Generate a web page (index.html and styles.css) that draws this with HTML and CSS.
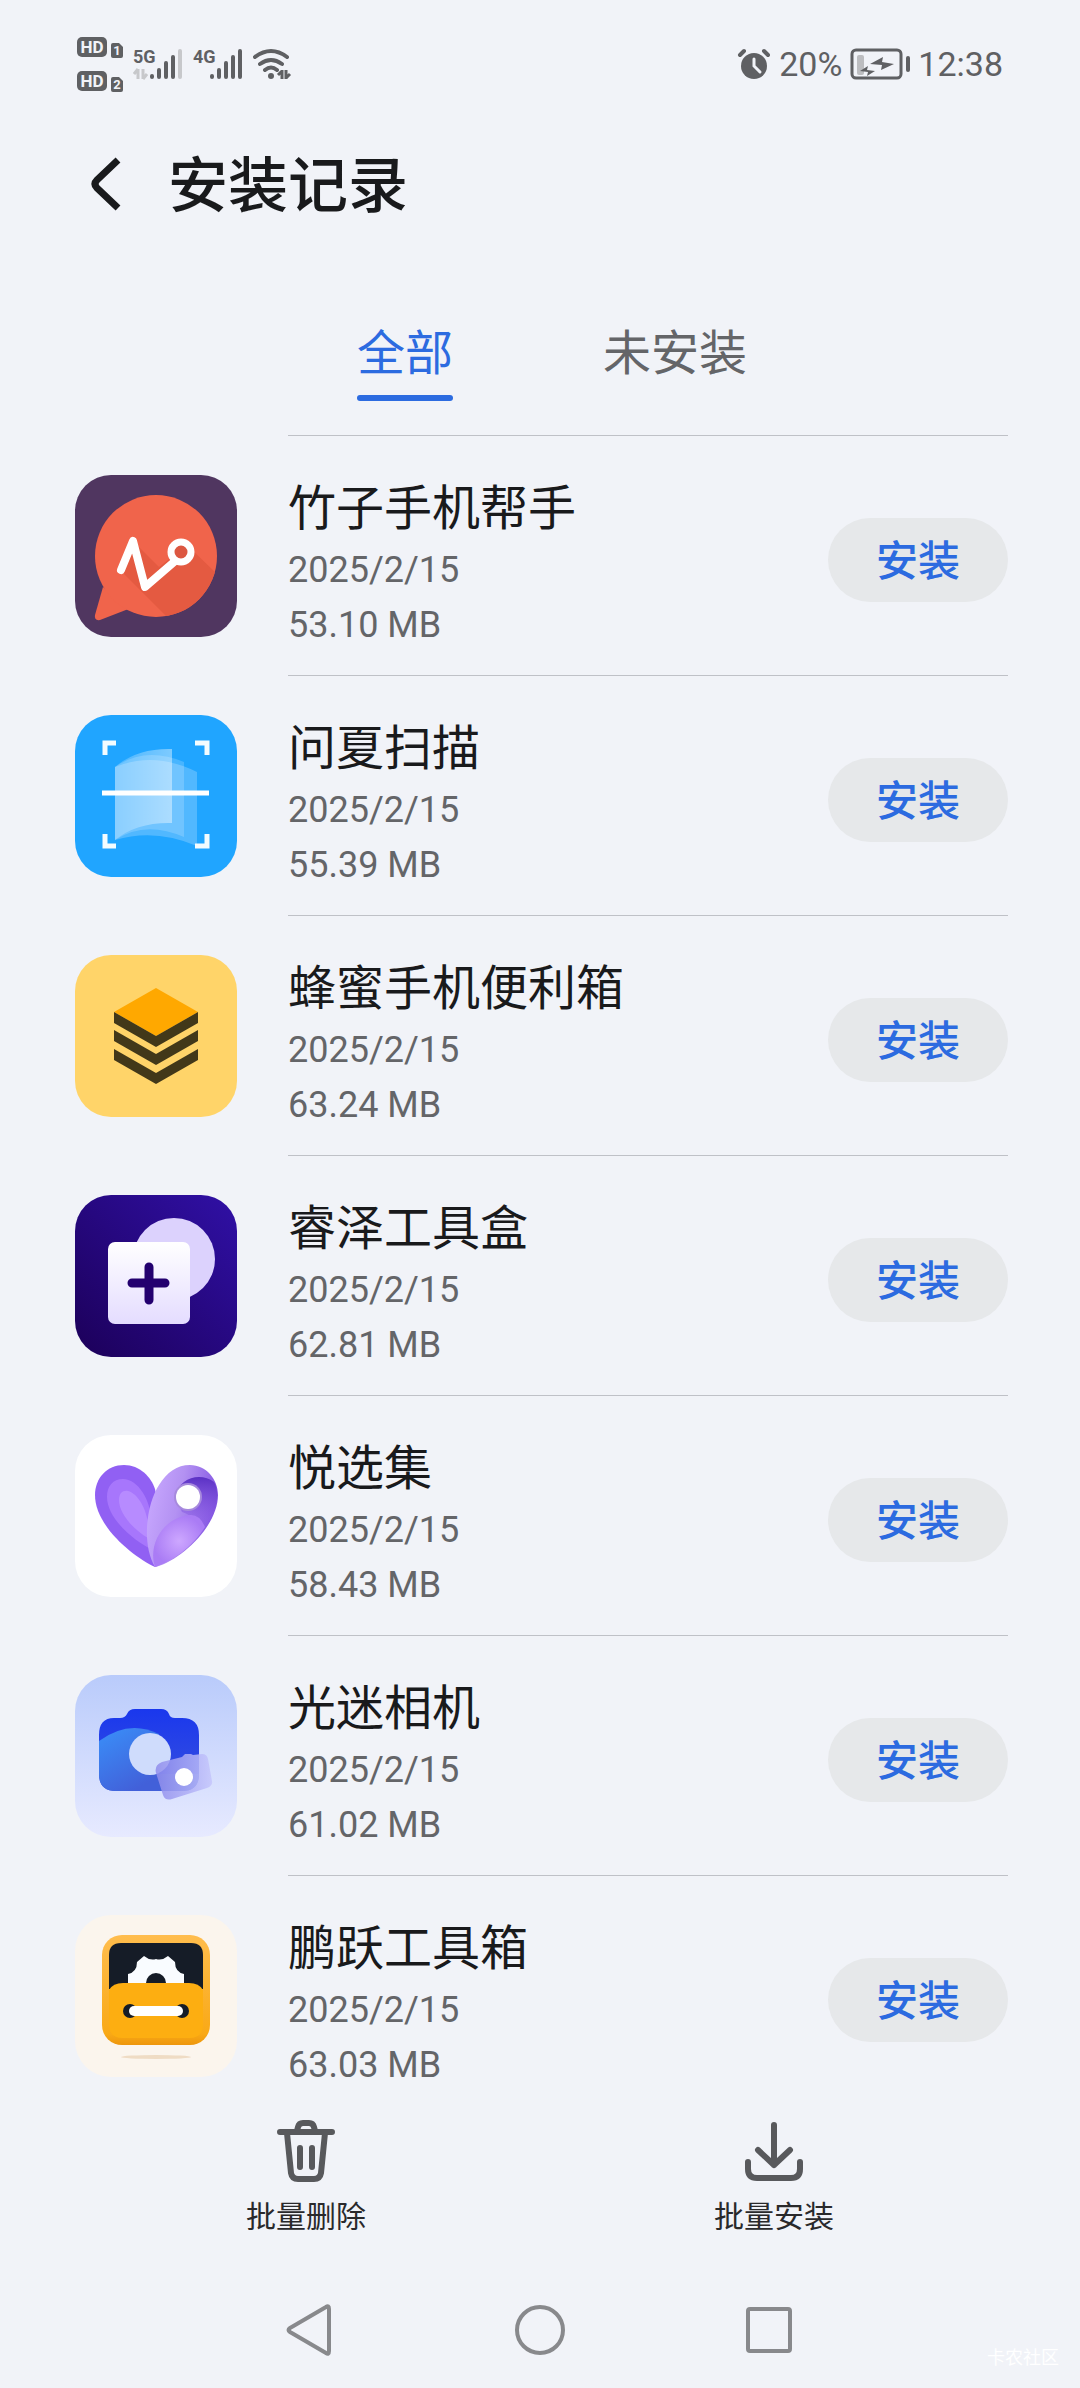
FILE: index.html
```html
<!DOCTYPE html>
<html lang="zh-CN">
<head>
<meta charset="UTF-8">
<meta name="viewport" content="width=device-width, initial-scale=1.0">
<title>安装记录</title>
<link rel="stylesheet" href="styles.css">
</head>
<body>
<div class="screen">
    <!-- Status bar -->
    <div class="status-bar">
        <div class="status-left">
            <svg width="46" height="68" viewBox="0 -6 46 68">
                <g fill="#5f6063">
                    <rect x="0" y="1" width="30" height="20" rx="5"/>
                    <path d="M36 7h6l4 4v9q0 2-2 2h-8q-2 0-2-2v-11q0-2 2-2z"/>
                    <rect x="0" y="35" width="30" height="20" rx="5"/>
                    <path d="M36 41h6l4 4v9q0 2-2 2h-8q-2 0-2-2v-11q0-2 2-2z"/>
                </g>
                <g class="hd-text">
                    <text x="15" y="17">HD</text>
                    <text x="15" y="51">HD</text>
                    <text class="hd-num" x="40" y="19">1</text>
                    <text class="hd-num" x="40" y="53">2</text>
                </g>
            </svg>
            <svg width="50" height="48" viewBox="0 -8 50 48">
                <text class="net-text" x="0" y="15">5G</text>
                <path d="M5 21v10M5 21l-4 5M10 21v10M10 31l4-5" stroke="#c7c8cb" stroke-width="3" fill="none"/>
                <path d="M19 28v1M26 22v7M33 15v14M40 9v20" stroke="#5f6063" stroke-width="4" stroke-linecap="round"/>
                <path d="M47 3v26" stroke="#c7c8cb" stroke-width="4" stroke-linecap="round"/>
            </svg>
            <svg width="50" height="48" viewBox="0 -8 50 48">
                <text class="net-text" x="0" y="15">4G</text>
                <path d="M19 28v1M26 22v7M33 15v14M40 9v20M47 3v26" stroke="#5f6063" stroke-width="4" stroke-linecap="round"/>
            </svg>
            <svg width="40" height="32" viewBox="0 0 40 32">
                <g stroke="#5f6063" stroke-width="4" stroke-linecap="round" fill="none">
                    <path d="M2 9q16-12 32 0M7 16q11-8 22 0M12 22q6-5 12 0"/>
                </g>
                <circle cx="18" cy="28" r="3" fill="#5f6063"/>
                <path d="M29 22v9M29 23l-4 4M33 22v9M33 30l4-4" stroke="#5f6063" stroke-width="3" fill="none"/>
            </svg>
        </div>
        <div class="status-right">
            <svg width="34" height="34" viewBox="0 0 34 34">
                <circle cx="17" cy="19" r="13" fill="#5f6063"/>
                <path d="M3 8l4-4M31 8l-4-4" stroke="#5f6063" stroke-width="4" stroke-linecap="round"/>
                <path d="M17 12v7l6 6" stroke="#f1f3f8" stroke-width="3" stroke-linecap="round" fill="none"/>
            </svg>
            <span>20%</span>
            <svg width="60" height="34" viewBox="0 0 60 34">
                <rect x="2" y="3" width="49" height="28" rx="4" fill="none" stroke="#5f6063" stroke-width="3"/>
                <rect x="7" y="8" width="7" height="20" rx="2" fill="#bcbdc0"/>
                <path d="M20 17l13-7-1 5 12 2-13 6 1-5zM10 24l8-5-1 4 8 1-8 5 1-4z" fill="#5f6063"/>
                <path d="M58 11v12" stroke="#5f6063" stroke-width="4" stroke-linecap="round"/>
            </svg>
            <span>12:38</span>
        </div>
    </div>

    <!-- Title -->
    <header class="header">
        <button class="back" type="button" aria-label="返回">
            <svg width="32" height="56" viewBox="0 0 32 56">
                <path d="M27 4L6 24q-4 4 0 8L27 52" fill="none" stroke="#191a1c" stroke-width="7"/>
            </svg>
        </button>
        <h1>安装记录</h1>
    </header>

    <nav class="tabs">
        <a class="tab active" href="#all">全部</a>
        <a class="tab" href="#pending">未安装</a>
    </nav>

    <!-- Records -->
    <ul class="app-list" id="all">
        <li class="app">
            <svg class="app-icon" viewBox="0 0 162 162">
                <defs>
                    <clipPath id="bubble"><circle cx="81" cy="81" r="61"/></clipPath>
                </defs>
                <rect width="162" height="162" fill="#503660"/>
                <path d="M28 112L20 140q-1 6 5 5L56 133z" fill="#f0644b"/>
                <circle cx="81" cy="81" r="61" fill="#f0644b"/>
                <path d="M46 96L58 66L84 92L112 70L170 126L126 176z" fill="#e45a41" clip-path="url(#bubble)"/>
                <path d="M46 95L58 66L70 112L99 87" fill="none" stroke="#fff" stroke-width="8" stroke-linecap="round" stroke-linejoin="round"/>
                <circle cx="106" cy="77" r="10" fill="#dc5741" stroke="#fff" stroke-width="7"/>
            </svg>
            <div class="app-body">
                <div class="app-info">
                    <h2>竹子手机帮手</h2>
                    <p>2025/2/15</p>
                    <p>53.10 MB</p>
                </div>
                <button class="install" type="button">安装</button>
            </div>
        </li>
        <li class="app">
            <svg class="app-icon" viewBox="0 0 162 162">
                <defs>
                    <linearGradient id="page" x1="0" x2="1">
                        <stop offset="0" stop-color="#fff" stop-opacity=".18"/>
                        <stop offset="1" stop-color="#fff" stop-opacity=".42"/>
                    </linearGradient>
                </defs>
                <rect width="162" height="162" fill="#20a5ff"/>
                <path d="M40 52Q80 36 122 57V131Q80 113 40 125z" fill="#fff" opacity=".22"/>
                <path d="M40 52Q70 31 109 47V122Q70 105 40 125z" fill="#fff" opacity=".18"/>
                <path d="M40 52Q62 33 97 34V108Q62 107 40 125z" fill="url(#page)"/>
                <path d="M27 78H134" stroke="#fff" stroke-width="5"/>
                <path d="M30 40V28H41M120 28H132V40M30 119V131H41M120 131H132V119" fill="none" stroke="#f3fcff" stroke-width="5"/>
            </svg>
            <div class="app-body">
                <div class="app-info">
                    <h2>问夏扫描</h2>
                    <p>2025/2/15</p>
                    <p>55.39 MB</p>
                </div>
                <button class="install" type="button">安装</button>
            </div>
        </li>
        <li class="app">
            <svg class="app-icon" viewBox="0 0 162 162">
                <rect width="162" height="162" fill="#ffd469"/>
                <path d="M81 33L123 57L81 81L39 57z" fill="#ffa800"/>
                <path d="M39 57L81 81L123 57V68L81 92L39 68zM39 75L81 99L123 75V86L81 110L39 86zM39 94L81 118L123 94V105L81 129L39 105z" fill="#423819"/>
            </svg>
            <div class="app-body">
                <div class="app-info">
                    <h2>蜂蜜手机便利箱</h2>
                    <p>2025/2/15</p>
                    <p>63.24 MB</p>
                </div>
                <button class="install" type="button">安装</button>
            </div>
        </li>
        <li class="app">
            <svg class="app-icon" viewBox="0 0 162 162">
                <defs>
                    <linearGradient id="night" x1="0" y1="1" x2="1" y2="0">
                        <stop offset="0" stop-color="#1c0059"/>
                        <stop offset="1" stop-color="#3010a6"/>
                    </linearGradient>
                    <linearGradient id="sheet" x1="0" y1="0" x2="0" y2="1">
                        <stop offset="0" stop-color="#fff"/>
                        <stop offset="1" stop-color="#e4dcff"/>
                    </linearGradient>
                </defs>
                <rect width="162" height="162" fill="url(#night)"/>
                <circle cx="99" cy="64" r="41" fill="#dcd2fd"/>
                <rect x="33" y="47" width="82" height="82" rx="7" fill="url(#sheet)"/>
                <path d="M74 72V105M57 88H90" stroke="#23006f" stroke-width="9" stroke-linecap="round"/>
            </svg>
            <div class="app-body">
                <div class="app-info">
                    <h2>睿泽工具盒</h2>
                    <p>2025/2/15</p>
                    <p>62.81 MB</p>
                </div>
                <button class="install" type="button">安装</button>
            </div>
        </li>
        <li class="app">
            <svg class="app-icon" viewBox="0 0 162 162">
                <defs>
                    <linearGradient id="wing" x1="0" y1=".2" x2="1" y2=".5">
                        <stop offset="0" stop-color="#c9a9ff"/>
                        <stop offset=".45" stop-color="#b391f2"/>
                        <stop offset="1" stop-color="#7e4fe0"/>
                    </linearGradient>
                    <linearGradient id="swirl" x1="0" y1="0" x2="0" y2="1">
                        <stop offset="0" stop-color="#5a30c4"/>
                        <stop offset="1" stop-color="#9a6bee" stop-opacity=".2"/>
                    </linearGradient>
                    <radialGradient id="petal">
                        <stop offset="0" stop-color="#cda7ff"/>
                        <stop offset="1" stop-color="#aa7cf5"/>
                    </radialGradient>
                </defs>
                <rect width="162" height="162" fill="#fff"/>
                <path d="M80 132C60 123 20 92 20 60C20 43 32 30 49 30C65 30 76 42 80 54L88 90z" fill="#9160f3"/>
                <path d="M80 116C58 106 32 83 32 62C32 51 38 44 48 44C63 44 77 66 76 88z" fill="#a776fc"/>
                <path d="M73 103C59 95 44 79 44 65C44 58 48 55 53 56C65 59 76 82 73 103z" fill="#b78bff"/>
                <path d="M80 132C66 108 72 68 84 50C92 37 102 30 115 30C131 30 143 44 143 60C143 90 108 124 81 132z" fill="url(#wing)"/>
                <path d="M100 62C104 42 126 37 139 47C147 60 139 82 126 96C124 86 116 80 107 77z" fill="url(#swirl)"/>
                <path d="M80 132C72 107 91 81 116 80Q125 80 130 92C118 111 98 126 80 132z" fill="url(#petal)"/>
                <circle cx="113" cy="62" r="14" fill="#a78add"/>
                <circle cx="113" cy="62" r="12" fill="#fff"/>
            </svg>
            <div class="app-body">
                <div class="app-info">
                    <h2>悦选集</h2>
                    <p>2025/2/15</p>
                    <p>58.43 MB</p>
                </div>
                <button class="install" type="button">安装</button>
            </div>
        </li>
        <li class="app">
            <svg class="app-icon" viewBox="0 0 162 162">
                <defs>
                    <linearGradient id="sky" x1="0" y1="0" x2="0" y2="1">
                        <stop offset="0" stop-color="#b9cbfb"/>
                        <stop offset="1" stop-color="#e7eaff"/>
                    </linearGradient>
                    <linearGradient id="body" x1="0" y1="0" x2="0" y2="1">
                        <stop offset="0" stop-color="#1836ee"/>
                        <stop offset="1" stop-color="#3a52dd"/>
                    </linearGradient>
                    <linearGradient id="wave" x1="0" y1="0" x2=".6" y2="1">
                        <stop offset="0" stop-color="#3991fa"/>
                        <stop offset="1" stop-color="#4260d9"/>
                    </linearGradient>
                    <linearGradient id="glass" x1="0" y1="0" x2="1" y2="0">
                        <stop offset="0" stop-color="#8f8cec"/>
                        <stop offset="1" stop-color="#c5c6fc"/>
                    </linearGradient>
                    <clipPath id="camera"><path d="M39 43H45Q50 43 52 39Q54 34 60 34H86Q92 34 94 39Q95 43 100 43H107Q124 43 124 60V99Q124 116 107 116H41Q24 116 24 99V60Q24 43 39 43z"/></clipPath>
                </defs>
                <rect width="162" height="162" fill="url(#sky)"/>
                <g clip-path="url(#camera)">
                    <rect x="20" y="30" width="110" height="90" fill="url(#body)"/>
                    <path d="M20 69Q52 43 84 59V116H20z" fill="url(#wave)"/>
                    <path d="M75 99H124V120H75z" fill="#4260d9"/>
                </g>
                <circle cx="75" cy="79" r="21" fill="#cfdcfc"/>
                <path d="M87 87L107 82L110 79H116L118 80L127 79Q132 79 133 84L137 106Q138 111 132 113L97 124Q90 126 88 120L81 98Q79 90 87 87z" fill="url(#glass)" opacity=".85"/>
                <circle cx="109" cy="102" r="9" fill="#fff"/>
            </svg>
            <div class="app-body">
                <div class="app-info">
                    <h2>光迷相机</h2>
                    <p>2025/2/15</p>
                    <p>61.02 MB</p>
                </div>
                <button class="install" type="button">安装</button>
            </div>
        </li>
        <li class="app">
            <svg class="app-icon" viewBox="0 0 162 162">
                <defs>
                    <linearGradient id="box" x1="0" y1="0" x2="0" y2="1">
                        <stop offset="0" stop-color="#ffbd4d"/>
                        <stop offset=".9" stop-color="#f9a916"/>
                        <stop offset="1" stop-color="#ed960c"/>
                    </linearGradient>
                </defs>
                <rect width="162" height="162" fill="#fbf5ed"/>
                <ellipse cx="81" cy="142" rx="35" ry="2" fill="#efdcc4"/>
                <rect x="27" y="20" width="108" height="110" rx="20" fill="url(#box)"/>
                <path d="M34 74V40Q34 28 46 28H116Q128 28 128 40V74z" fill="#151c27"/>
                <path d="M53 70V59Q62 57 62 47L69 41Q75 46 81 44Q87 46 93 41L100 47Q100 57 109 59V70z" fill="#f9fcff"/>
                <circle cx="81" cy="68" r="10" fill="#151c27"/>
                <path d="M34 75Q38 68 48 68H114Q124 68 128 75V109Q128 123 114 123H48Q34 123 34 109z" fill="#fdae11"/>
                <circle cx="55" cy="96" r="7" fill="#151c27"/>
                <circle cx="107" cy="96" r="7" fill="#151c27"/>
                <rect x="54" y="91" width="54" height="10" rx="5" fill="#fff"/>
            </svg>
            <div class="app-body">
                <div class="app-info">
                    <h2>鹏跃工具箱</h2>
                    <p>2025/2/15</p>
                    <p>63.03 MB</p>
                </div>
                <button class="install" type="button">安装</button>
            </div>
        </li>
    </ul>

    <!-- Batch actions -->
    <div class="toolbar">
        <button type="button">
            <svg width="72" height="72" viewBox="0 0 72 72" fill="none" stroke="#58595c" stroke-width="6" stroke-linecap="round" stroke-linejoin="round">
                <path d="M10 17H62M27 16L28 12Q29 8 33 8H39Q43 8 44 12L45 16M17 18L21 58Q22 64 28 64H44Q50 64 51 58L55 18M30 33V52M42 33V52"/>
            </svg>
            <span>批量删除</span>
        </button>
        <button type="button">
            <svg width="72" height="72" viewBox="0 0 72 72" fill="none" stroke="#58595c" stroke-width="6" stroke-linecap="round" stroke-linejoin="round">
                <path d="M36 10V50M20 35L36 50L52 35M10 47V54Q10 63 19 63H53Q62 63 62 54V47"/>
            </svg>
            <span>批量安装</span>
        </button>
    </div>

    <!-- System navigation -->
    <div class="system-nav">
        <button type="button" aria-label="返回上一页">
            <svg width="56" height="56" viewBox="0 0 56 56"><path d="M8 26L44 5Q47 3 47 7V49Q47 53 44 51L8 30Q5 28 8 26z"/></svg>
        </button>
        <button type="button" aria-label="主屏幕">
            <svg width="56" height="56" viewBox="0 0 56 56"><circle cx="28" cy="28" r="23"/></svg>
        </button>
        <button type="button" aria-label="最近任务">
            <svg width="56" height="56" viewBox="0 0 56 56"><rect x="6" y="7" width="42" height="42" rx="2"/></svg>
        </button>
    </div>
    <span class="watermark">卡农社区</span>
</div>
</body>
</html>
```
FILE: styles.css
```css
* {
    box-sizing: border-box;
}

body {
    margin: 0;
    background-color: #f1f3f8;
    color: #191a1c;
    font-family: Roboto, "Noto Sans CJK SC", sans-serif;
}

h1, h2, p, ul {
    margin: 0;
    padding: 0;
    font-weight: 400;
}

button {
    padding: 0;
    border: 0;
    background: none;
    color: inherit;
    font-family: inherit;
    cursor: pointer;
}

svg {
    display: block;
    flex-shrink: 0;
}

.screen {
    position: relative;
    display: flex;
    flex-direction: column;
    min-height: 100vh;
}

/* status bar */
.status-bar {
    display: flex;
    justify-content: space-between;
    align-items: center;
    height: 128px;
    padding: 0 77px;
    color: #5f6063;
    font-size: 34px;
}

.status-left,
.status-right {
    display: flex;
    align-items: center;
    gap: 10px;
}

.status-right {
    gap: 8px;
}

.hd-text {
    fill: #f1f3f8;
    font-size: 17px;
    font-weight: 700;
    text-anchor: middle;
}

.hd-num {
    font-size: 13px;
}

.net-text {
    fill: #5f6063;
    font-family: "Liberation Sans Narrow", Roboto, sans-serif;
    font-size: 18px;
    font-weight: 700;
}

/* title */
.header {
    display: flex;
    align-items: center;
    gap: 45px;
    height: 112px;
    padding: 0 91px;
}

.header h1 {
    padding-top: 6px;
    font-size: 60px;
    font-weight: 500;
    line-height: 80px;
}

/* tabs */
.tabs {
    display: flex;
    justify-content: center;
    gap: 150px;
    margin: 82px 0 34px;
    padding-left: 24px;
}

.tab {
    color: #646568;
    font-size: 48px;
    line-height: 64px;
    text-decoration: none;
}

.tab::after {
    content: "";
    display: block;
    height: 6px;
    margin-top: 9px;
    border-radius: 3px;
}

.tab.active {
    color: #2c6be0;
}

.tab.active::after {
    background-color: #2c6be0;
}

/* record list */
.app-list {
    padding: 0 72px 0 75px;
    list-style: none;
}

.app {
    display: flex;
    gap: 51px;
}

.app-icon {
    width: 162px;
    height: 162px;
    margin-top: 40px;
    border-radius: 36px;
}

.app-body {
    display: flex;
    flex: 1;
    justify-content: space-between;
    align-items: flex-start;
    padding: 41px 0 22px;
    border-top: 1px solid #bfc1c7;
}

.app:last-child .app-body {
    padding-bottom: 0;
}

.app-info {
    color: #646568;
    font-size: 36px;
    line-height: 55px;
}

.app-info h2 {
    margin-bottom: 2px;
    color: #191a1c;
    font-size: 48px;
    line-height: 64px;
}

.install {
    width: 180px;
    height: 84px;
    margin-top: 41px;
    padding-bottom: 6px;
    border-radius: 42px;
    background-color: #e6e8ea;
    color: #2c6be0;
    font-size: 42px;
    font-weight: 500;
}

/* batch actions */
.toolbar {
    display: flex;
    padding: 22px 72px 0;
}

.toolbar button {
    display: flex;
    flex: 1;
    flex-direction: column;
    align-items: center;
    gap: 10px;
    color: #29292b;
    font-size: 30px;
    line-height: 40px;
}

/* system navigation */
.system-nav {
    display: flex;
    justify-content: center;
    gap: 174px;
    margin-top: auto;
    padding: 30px 0;
}

.system-nav svg {
    fill: none;
    stroke: #88898c;
    stroke-width: 4;
}

.watermark {
    position: absolute;
    right: 21px;
    bottom: 18px;
    color: #fff;
    font-size: 18px;
    line-height: 24px;
}
```
